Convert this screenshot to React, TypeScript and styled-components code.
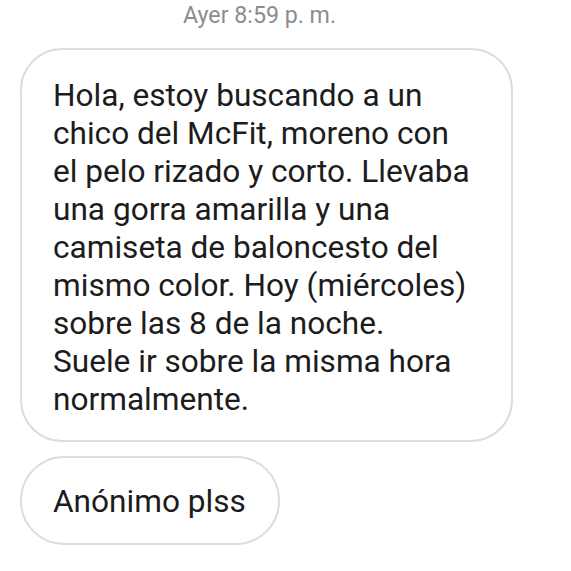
import * as React from 'react';
import styled, { createGlobalStyle } from 'styled-components';

const GlobalStyle = createGlobalStyle`
  html, body {
    margin: 0;
    padding: 0;
    background: #ffffff;
  }
  body {
    font-family: Roboto, "Noto Sans", Arial, sans-serif;
    -webkit-font-smoothing: antialiased;
  }
`;

const Thread = styled.main`
  display: flex;
  flex-direction: column;
  align-items: flex-start;
  width: 571px;
  height: 571px;
  box-sizing: border-box;
  padding: 1px 0 0 20px;
  overflow: hidden;
  background: #ffffff;
`;

const Stamp = styled.div`
  width: 479px;
  text-align: center;
  font-size: 23.2px;
  line-height: 28px;
  color: #8c8c8c;
  margin-bottom: 19px;
`;

const Bubble = styled.div<{ $pad: string }>`
  box-sizing: border-box;
  border: 2px solid #dcdcdc;
  border-radius: 44px;
  padding: ${p => p.$pad};
  font-size: 31.6px;
  line-height: 38px;
  color: #1c1c1c;
  background: #ffffff;
  & + & {
    margin-top: 14px;
  }
`;

const MainBubble = styled(Bubble)`
  width: 493px;
  border-radius: 42px;
`;

const lines = [
  'Hola, estoy buscando a un',
  'chico del McFit, moreno con',
  'el pelo rizado y corto. Llevaba',
  'una gorra amarilla y una',
  'camiseta de baloncesto del',
  'mismo color. Hoy (miércoles)',
  'sobre las 8 de la noche.',
  'Suele ir sobre la misma hora',
  'normalmente.',
];

export default function App() {
  return (
    <>
      <GlobalStyle />
      <Thread>
        <Stamp>Ayer 8:59 p. m.</Stamp>
        <MainBubble $pad="27px 20px 21px 31px">
          {lines.map((l, i) => (
            <React.Fragment key={i}>
              {l}
              {i < lines.length - 1 && <br />}
            </React.Fragment>
          ))}
        </MainBubble>
        <Bubble $pad="25px 32px 22px 31px">Anónimo plss</Bubble>
      </Thread>
    </>
  );
}
